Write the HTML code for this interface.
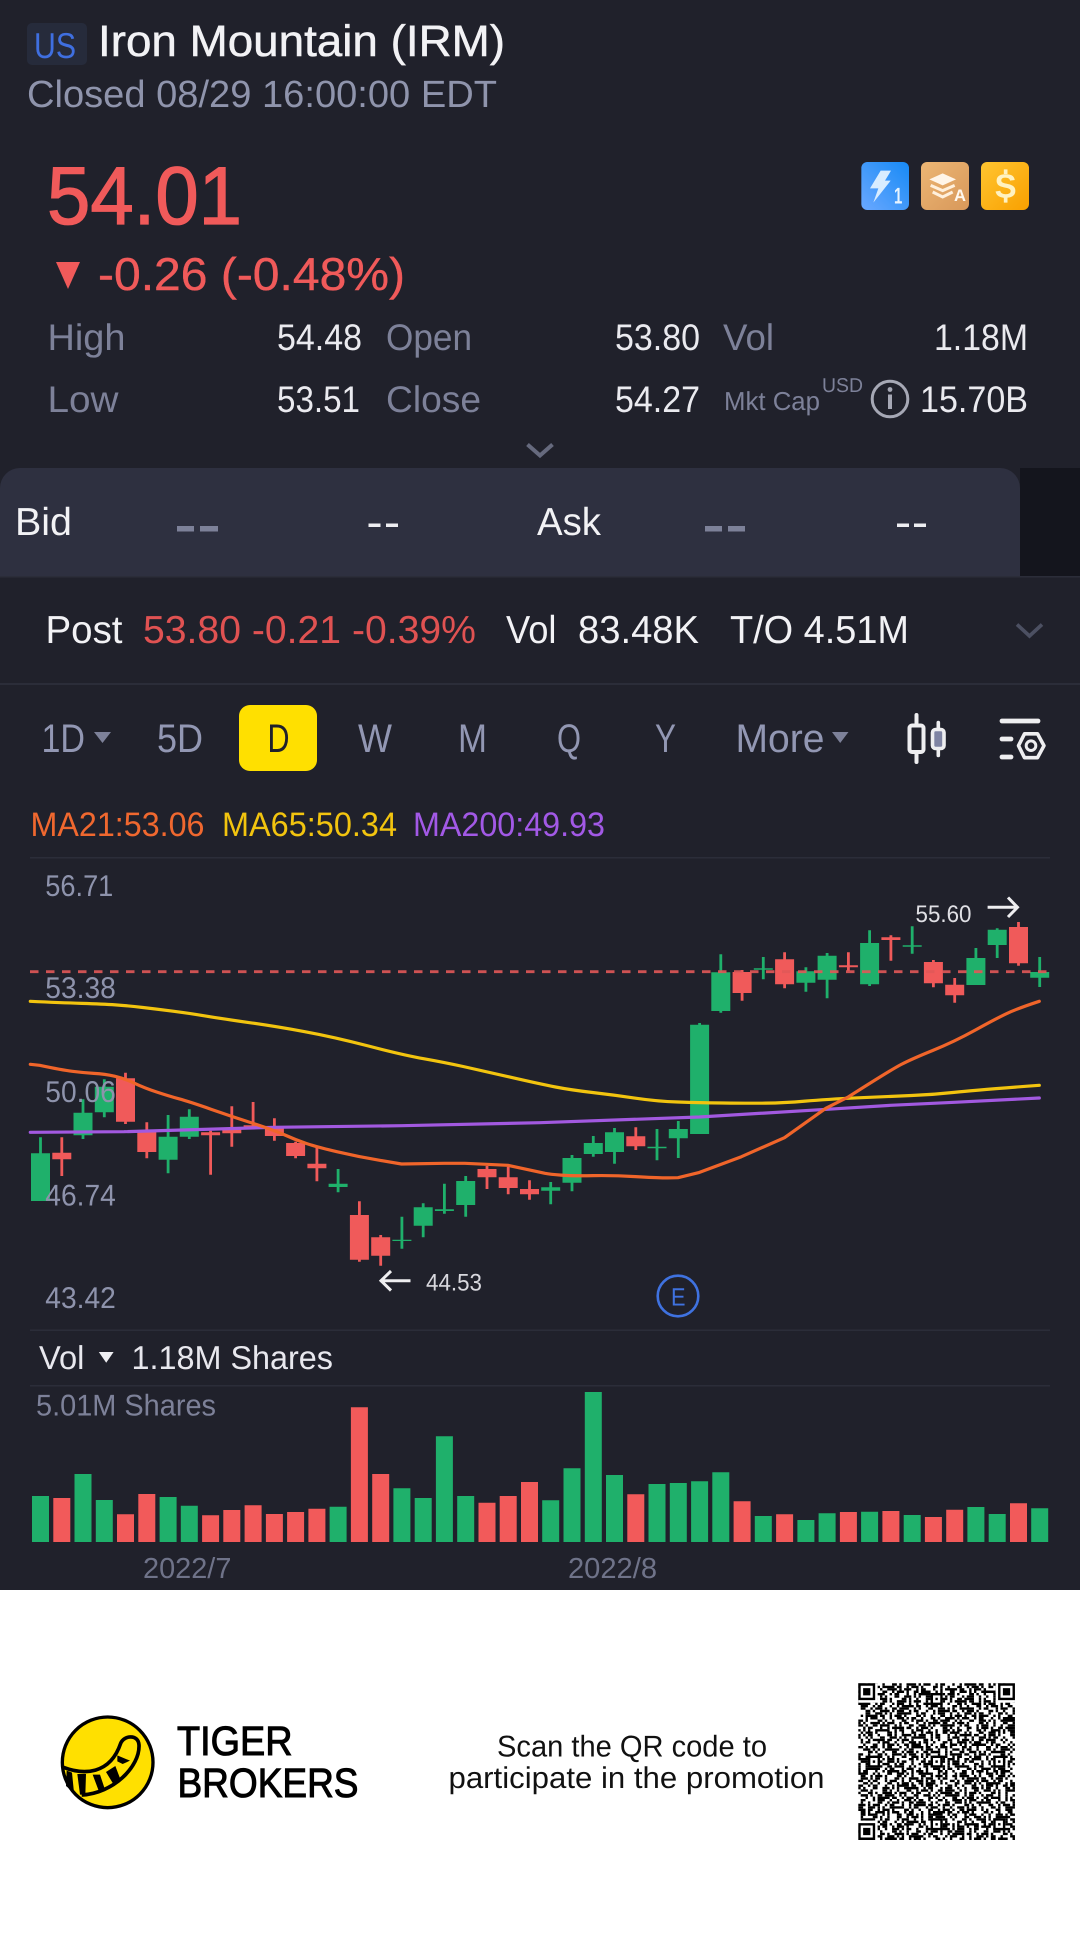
<!DOCTYPE html>
<html lang="en"><head><meta charset="utf-8"><title>Iron Mountain (IRM)</title>
<style>
html,body{margin:0;padding:0;background:#20212b;width:1080px;height:1935px;overflow:hidden}
svg{display:block}
text{font-family:"Liberation Sans",sans-serif;white-space:pre;text-rendering:geometricPrecision}
</style></head><body>
<svg xmlns="http://www.w3.org/2000/svg" width="1080" height="1935" viewBox="0 0 1080 1935">
<defs>
<linearGradient id="gb" x1="0" y1="1" x2="1" y2="0"><stop offset="0" stop-color="#6aa8ff"/><stop offset="1" stop-color="#178af5"/></linearGradient>
<linearGradient id="gw" x1="0" y1="0" x2="1" y2="1"><stop offset="0" stop-color="#ecb674"/><stop offset="1" stop-color="#d8985a"/></linearGradient>
<linearGradient id="gg" x1="0" y1="0" x2="1" y2="1"><stop offset="0" stop-color="#ffc530"/><stop offset="1" stop-color="#f9a000"/></linearGradient>
</defs>
<rect width="1080" height="1935" fill="#20212b"/>

<!-- header -->
<rect x="27" y="23" width="60" height="42" rx="5" fill="#262b3b"/>
<text x="34" y="58" font-size="36" fill="#3f6fe0" textLength="42" lengthAdjust="spacingAndGlyphs">US</text>
<text x="98" y="56" font-size="44" fill="#f2f2f5" stroke="#f2f2f5" stroke-width=".5" textLength="407" lengthAdjust="spacingAndGlyphs">Iron Mountain (IRM)</text>
<text x="27" y="107" font-size="38" fill="#8f94ac" textLength="470" lengthAdjust="spacingAndGlyphs">Closed 08/29 16:00:00 EDT</text>

<text x="47" y="224" font-size="82" fill="#f05a5a" stroke="#f05a5a" stroke-width="1.2" textLength="195" lengthAdjust="spacingAndGlyphs">54.01</text>
<path d="M56 262H80L68 289Z" fill="#f05a5a"/>
<text x="98" y="290" font-size="46" fill="#f05a5a" stroke="#f05a5a" stroke-width=".4" textLength="307" lengthAdjust="spacingAndGlyphs">-0.26 (-0.48%)</text>

<g transform="translate(840 140) scale(.33333)">
<rect x="64" y="66" width="143" height="144" rx="18" fill="url(#gb)"/>
<path d="M122 92H153L135 122H152L100 188L115 145H90Z" fill="#d8ecff"/>
<text x="162" y="190" font-size="68" font-weight="700" fill="#e8f4ff" textLength="25" lengthAdjust="spacingAndGlyphs">1</text>
<rect x="243" y="66" width="144" height="144" rx="18" fill="url(#gw)"/>
<path d="M268 118L308 100L348 118L308 136Z" fill="#fff5e8"/>
<path d="M272 136L308 152L344 136M278 156L308 171L338 156" fill="none" stroke="#fff0dc" stroke-width="9"/>
<text x="342" y="183" font-size="50" font-weight="700" fill="#fff8ee" textLength="36" lengthAdjust="spacingAndGlyphs">A</text>
<rect x="423" y="66" width="144" height="144" rx="18" fill="url(#gg)"/>
<text x="464" y="172" font-size="100" font-weight="700" fill="#fff2c0" textLength="66" lengthAdjust="spacingAndGlyphs">S</text>
<path d="M497 88V102M497 172V188" stroke="#fff2c0" stroke-width="11"/>
</g>

<g font-size="37" fill="#7d8199">
<text x="47.5" y="350" textLength="78" lengthAdjust="spacingAndGlyphs">High</text>
<text x="386" y="350" textLength="86" lengthAdjust="spacingAndGlyphs">Open</text>
<text x="723" y="350" textLength="51" lengthAdjust="spacingAndGlyphs">Vol</text>
<text x="47.5" y="412" textLength="71" lengthAdjust="spacingAndGlyphs">Low</text>
<text x="386" y="412" textLength="95" lengthAdjust="spacingAndGlyphs">Close</text>
</g>
<g font-size="37" fill="#eaeaef">
<text x="277" y="350" textLength="85" lengthAdjust="spacingAndGlyphs">54.48</text>
<text x="615" y="350" textLength="85" lengthAdjust="spacingAndGlyphs">53.80</text>
<text x="934" y="350" textLength="94" lengthAdjust="spacingAndGlyphs">1.18M</text>
<text x="277" y="412" textLength="83" lengthAdjust="spacingAndGlyphs">53.51</text>
<text x="615" y="412" textLength="85" lengthAdjust="spacingAndGlyphs">54.27</text>
<text x="920" y="412" textLength="108" lengthAdjust="spacingAndGlyphs">15.70B</text>
</g>
<text x="724" y="410" font-size="26" fill="#7d8199" textLength="96" lengthAdjust="spacingAndGlyphs">Mkt Cap</text>
<text x="822" y="392" font-size="20" fill="#7d8199" textLength="41" lengthAdjust="spacingAndGlyphs">USD</text>
<circle cx="890" cy="399" r="17.8" fill="none" stroke="#a6a8b5" stroke-width="3"/>
<circle cx="890" cy="389.5" r="2.4" fill="#a6a8b5"/>
<rect x="888" y="394.5" width="4" height="14.5" fill="#a6a8b5"/>
<path d="M527.5 444.5L540 455.5L552.5 444.5" fill="none" stroke="#666a7e" stroke-width="4"/>

<!-- bid/ask -->
<rect x="1020" y="468" width="60" height="108" fill="#14151d"/>
<path d="M0 577V488A20 20 0 0 1 20 468H1000A20 20 0 0 1 1020 488V577Z" fill="#2e3040"/>
<text x="15" y="535" font-size="39" fill="#f2f2f5" textLength="57" lengthAdjust="spacingAndGlyphs">Bid</text>
<text x="537" y="535" font-size="39" fill="#f2f2f5" textLength="64" lengthAdjust="spacingAndGlyphs">Ask</text>
<path d="M177 526h17v5.5h-17zM200 526h18v5.5h-18zM705 526h17v5.5h-17zM728 526h17v5.5h-17z" fill="#7d8199"/>
<path d="M368.5 523.5h12v3.5h-12zM386 523.5h12v3.5h-12zM897 523.5h12v3.5h-12zM914 523.5h12v3.5h-12z" fill="#eeeef2"/>

<!-- post -->
<text x="45.5" y="643" font-size="39" fill="#f2f2f5" textLength="77" lengthAdjust="spacingAndGlyphs">Post</text>
<text x="143" y="643" font-size="39" fill="#e05252" textLength="333" lengthAdjust="spacingAndGlyphs">53.80 -0.21 -0.39%</text>
<text x="506" y="643" font-size="39" fill="#f2f2f5" textLength="50.5" lengthAdjust="spacingAndGlyphs">Vol</text>
<text x="578" y="643" font-size="39" fill="#f2f2f5" textLength="121" lengthAdjust="spacingAndGlyphs">83.48K</text>
<text x="730" y="643" font-size="39" fill="#f2f2f5" textLength="179" lengthAdjust="spacingAndGlyphs">T/O 4.51M</text>
<path d="M1017 624.5L1029.5 636L1042 624.5" fill="none" stroke="#4c5062" stroke-width="3.6"/>
<rect x="0" y="683" width="1080" height="2" fill="#2b2d39"/>
<rect x="0" y="576" width="1080" height="1.5" fill="#2b2d39"/>

<!-- tabs -->
<g font-size="40" fill="#9297b3">
<text x="41.5" y="752" textLength="43.5" lengthAdjust="spacingAndGlyphs">1D</text>
<text x="157" y="752" textLength="46" lengthAdjust="spacingAndGlyphs">5D</text>
<text x="358" y="752" textLength="34" lengthAdjust="spacingAndGlyphs">W</text>
<text x="458" y="752" textLength="29" lengthAdjust="spacingAndGlyphs">M</text>
<text x="557" y="752" textLength="24" lengthAdjust="spacingAndGlyphs">Q</text>
<text x="655" y="752" textLength="21" lengthAdjust="spacingAndGlyphs">Y</text>
<text x="735.5" y="752" textLength="89" lengthAdjust="spacingAndGlyphs">More</text>
</g>
<path d="M94 732H111L102.5 743ZM832 732H848.5L840.2 743Z" fill="#7d8199"/>
<rect x="239" y="705" width="78" height="66" rx="11" fill="#ffe000"/>
<text x="267.5" y="752" font-size="40" fill="#20212b" textLength="22" lengthAdjust="spacingAndGlyphs">D</text>

<rect x="909.5" y="725.5" width="14" height="26.5" rx="2.5" fill="#20212b" stroke="#eeeef0" stroke-width="4"/>
<path d="M916.5 715V724M916.5 753V762" stroke="#eeeef0" stroke-width="4" stroke-linecap="round"/>
<rect x="932.5" y="729.5" width="11.5" height="19" rx="3" fill="#7f84a3" stroke="#eeeef0" stroke-width="3.6"/>
<path d="M938.3 722.5V728M938.3 750V755.5" stroke="#eeeef0" stroke-width="3.6" stroke-linecap="round"/>
<path d="M1002 721H1038M1002 739H1011M1002 757H1011" stroke="#eeeef0" stroke-width="4.8" stroke-linecap="round"/>
<path d="M1018.5 745.7L1024.5 733.8H1037.5L1044 745.7L1037.5 757.7H1024.5Z" fill="none" stroke="#eeeef0" stroke-width="3.6" stroke-linejoin="round"/>
<circle cx="1031" cy="745.7" r="4.8" fill="none" stroke="#eeeef0" stroke-width="3"/>

<!-- MA legend -->
<text x="30.5" y="836" font-size="34" fill="#f0682f" textLength="174" lengthAdjust="spacingAndGlyphs">MA21:53.06</text>
<text x="222" y="836" font-size="34" fill="#f2c40f" textLength="175" lengthAdjust="spacingAndGlyphs">MA65:50.34</text>
<text x="413" y="836" font-size="34" fill="#a259e6" textLength="192" lengthAdjust="spacingAndGlyphs">MA200:49.93</text>
<rect x="30" y="857" width="1020" height="1.5" fill="#2b2d39"/>

<!-- candles -->
<g fill="none">
<path stroke="#1fb06b" stroke-width="2.8" d="M40.5 1137.3V1201M83 1099.3V1139M104.3 1079.3V1117.3M168.1 1115V1173.3M189.3 1109.3V1139M338.1 1169V1192.3M401.9 1216.7V1248.7M423.2 1203.3V1237.3M444.4 1183.7V1213.7M465.7 1176V1216.7M550.7 1182V1204.3M572 1155V1191.3M593.3 1136V1156.7M614.5 1128V1163.7M657 1129V1160.3M678.3 1121V1158M699.6 1023V1134M720.8 954.3V1012.7M763.3 957V979.3M805.9 967.3V991.7M827.1 953V998.3M869.6 930.3V986M912.2 926.3V953.7M975.9 948V985M997.2 928.3V958M1039.7 957V987"/>
<path stroke="#1fb06b" stroke-width="19" d="M40.5 1153.3V1201M83 1112.7V1135.3M104.3 1086.7V1112.3M168.1 1136.7V1159.7M189.3 1116.7V1136.7M338.1 1183.7V1187M401.9 1239.7V1241M423.2 1207.3V1225.7M444.4 1209.3V1211M465.7 1181V1205M550.7 1187.3V1190.7M572 1158V1182.7M593.3 1143V1154M614.5 1132.3V1152M657 1146.7V1148.3M678.3 1129V1138.3M699.6 1024.7V1134M720.8 972.3V1011M763.3 968.3V969.7M805.9 971.3V982.7M827.1 955.7V979.7M869.6 943V984.3M912.2 945.3V946.7M975.9 958V985M997.2 929.7V945M1039.7 972V977.7"/>
<path stroke="#f05a5a" stroke-width="2.8" d="M61.8 1137.3V1176M125.5 1072.7V1124M146.8 1122.3V1158.3M210.6 1130.7V1174.7M231.8 1106.3V1146.7M253.1 1102V1128.3M274.4 1118.3V1140.7M295.6 1141.7V1158.3M316.9 1146.7V1181.3M359.4 1201.3V1261.7M380.7 1235V1265.7M487 1166V1189M508.2 1166.7V1194.3M529.5 1180.3V1199.7M635.8 1127.3V1150M742.1 970V1000.7M784.6 952.3V988.3M848.4 952.3V970.7M890.9 935.3V960.7M933.4 960V987.3M954.7 978V1002.7M1018.5 922V965.7"/>
<path stroke="#f05a5a" stroke-width="19" d="M61.8 1152.7V1159.3M125.5 1078.3V1121.7M146.8 1130.7V1152M210.6 1132.3V1135.3M231.8 1129.3V1133.3M253.1 1125.3V1128.3M274.4 1128.3V1136M295.6 1143V1156M316.9 1163.7V1168.3M359.4 1215V1259.7M380.7 1237.3V1255.7M487 1169V1177.3M508.2 1177.3V1188M529.5 1189V1194.3M635.8 1136.3V1146.3M742.1 972V993M784.6 959.3V984.3M848.4 965.3V967.3M890.9 937.3V940M933.4 962V983.3M954.7 984.7V995.3M1018.5 927V963.3"/>
</g>
<path d="M30 971.7H1047" stroke="#e25858" stroke-width="2.8" stroke-dasharray="8.5 7.5" opacity=".9"/>

<!-- MA lines -->
<g fill="none" stroke-width="3.2" stroke-linejoin="round" stroke-linecap="round">
<polyline stroke="#a259e0" points="30.3,1132.3 124,1131.7 274,1127.3 402,1125.7 540,1122.7 699.4,1117 826.8,1109.3 890.6,1105.3 954.3,1102.3 1039.3,1098"/>
<path stroke="#f2c40f" d="M30.3 1001.3Q60.3 1002.7 81.8 1003.35Q103.3 1004 115.4 1004.85Q127.4 1005.7 142.9 1007.5Q158.4 1009.3 173.9 1011.3Q189.4 1013.3 206.6 1016.15Q223.8 1019 249.65 1022.65Q275.5 1026.3 304.75 1031.65Q334 1037 368.45 1046Q402.9 1055 423.55 1058.65Q444.2 1062.3 463.15 1066.5Q482.1 1070.7 511 1077.35Q540 1084 555.5 1087Q571 1090 592.5 1092.5Q614 1095 635.5 1098.15Q657 1101.3 678 1102Q699 1102.7 722.8 1103Q746.6 1103.3 765.55 1103.15Q784.5 1103 805.15 1101.15Q825.8 1099.3 858.2 1097.8Q890.6 1096.3 911.6 1095.5Q932.6 1094.7 954.1 1092.35Q975.6 1090 1039.3 1085.3"/>
<path stroke="#f0652a" d="M30.3 1064.3L39.6 1065.3Q62 1070 72.3 1071.35Q82.6 1072.7 93.8 1073.35Q105 1074 114.5 1076.15Q124 1078.3 134.3 1083.15Q144.6 1088 156.65 1092Q168.7 1096 179 1098.85Q189.4 1101.7 210.9 1109.2Q232.4 1116.7 253.1 1123.35Q273.8 1130 284.9 1135Q296 1140 306.4 1143.5Q316.8 1147 337.4 1151.85Q358 1156.7 379.75 1160.35L401.5 1164L444.2 1163.3L464.9 1163.3L507.9 1165.3Q540 1172.3 545 1173.3Q550.3 1174.3 561 1175.15Q571.7 1176 592.85 1175.65Q614 1175.3 635.5 1176.65Q657 1178 667.5 1177.85L678 1177.7L698.4 1172.7L741.4 1156.7L784.5 1137.7L825.8 1108.3L848.2 1097Q890.6 1070 901.1 1064.5Q911.6 1059 932.95 1050.35Q954.3 1041.7 975.45 1030Q996.6 1018.3 1007.3 1013.3Q1018 1008.3 1039.3 1001.3"/>
</g>

<!-- axis labels -->
<g font-size="30" fill="#8e93ac">
<text x="45.3" y="896" textLength="68" lengthAdjust="spacingAndGlyphs">56.71</text>
<text x="45.3" y="998" textLength="70.5" lengthAdjust="spacingAndGlyphs">53.38</text>
<text x="45.3" y="1102" textLength="70.5" lengthAdjust="spacingAndGlyphs">50.06</text>
<text x="45.3" y="1205.7" textLength="70.5" lengthAdjust="spacingAndGlyphs">46.74</text>
<text x="45.3" y="1308" textLength="70.5" lengthAdjust="spacingAndGlyphs">43.42</text>
</g>
<path d="M410.5 1280.7H382M391 1271L381 1280.7L391 1290.5" fill="none" stroke="#eeeef0" stroke-width="3"/>
<text x="426" y="1290.7" font-size="24" fill="#d8d8de" textLength="56" lengthAdjust="spacingAndGlyphs">44.53</text>
<text x="915.5" y="922" font-size="24" fill="#e0e0e5" textLength="56" lengthAdjust="spacingAndGlyphs">55.60</text>
<path d="M987.6 907.3H1016.5M1008 897.5L1017.5 907.3L1008 917" fill="none" stroke="#eeeef0" stroke-width="3"/>
<circle cx="678" cy="1296" r="20.3" fill="none" stroke="#3f72e0" stroke-width="2.6"/>
<text x="671" y="1305.5" font-size="25" fill="#3f72e0" textLength="14.5" lengthAdjust="spacingAndGlyphs">E</text>

<!-- volume -->
<rect x="30" y="1329.5" width="1020" height="1.5" fill="#2b2d39"/>
<text x="39" y="1369" font-size="33" fill="#e8e8ee" textLength="45.4" lengthAdjust="spacingAndGlyphs">Vol</text>
<path d="M98.8 1352H113.6L106.2 1362.7Z" fill="#eeeef2"/>
<text x="131.5" y="1369" font-size="33" fill="#e8e8ee" textLength="201.5" lengthAdjust="spacingAndGlyphs">1.18M Shares</text>
<rect x="30" y="1385" width="1020" height="1.5" fill="#2b2d39"/>
<text x="36" y="1415.7" font-size="30" fill="#7d8199" textLength="180" lengthAdjust="spacingAndGlyphs">5.01M Shares</text>
<g fill="none" stroke-width="17">
<path stroke="#1fb06b" d="M40.5 1542V1496M83 1542V1474M104.3 1542V1500M168.1 1542V1497M189.3 1542V1505.7M338.1 1542V1506.7M401.9 1542V1488.3M423.2 1542V1498M444.4 1542V1436.3M465.7 1542V1496M550.7 1542V1500.3M572 1542V1468.3M593.3 1542V1392M614.5 1542V1475M657 1542V1484M678.3 1542V1483M699.6 1542V1481.3M720.8 1542V1472.3M763.3 1542V1516M805.9 1542V1520M827.1 1542V1513.3M869.6 1542V1511.7M912.2 1542V1515M975.9 1542V1507M997.2 1542V1514M1039.7 1542V1508.3"/>
<path stroke="#f25a5a" d="M61.8 1542V1498M125.5 1542V1514.3M146.8 1542V1494M210.6 1542V1515.3M231.8 1542V1510M253.1 1542V1505.3M274.4 1542V1514M295.6 1542V1512M316.9 1542V1508.7M359.4 1542V1407.3M380.7 1542V1474M487 1542V1502.7M508.2 1542V1496M529.5 1542V1482M635.8 1542V1494.3M742.1 1542V1501.3M784.6 1542V1514.3M848.4 1542V1512M890.9 1542V1511M933.4 1542V1517M954.7 1542V1509.7M1018.5 1542V1503.3"/>
</g>
<text x="143" y="1578" font-size="29" fill="#6f7389" textLength="88.4" lengthAdjust="spacingAndGlyphs">2022/7</text>
<text x="568" y="1578" font-size="29" fill="#6f7389" textLength="89" lengthAdjust="spacingAndGlyphs">2022/8</text>

<!-- footer -->
<rect x="0" y="1590" width="1080" height="345" fill="#ffffff"/>
<g transform="translate(0 1660) scale(.33333)">
<circle cx="323" cy="307" r="136" fill="#ffe000" stroke="#000" stroke-width="10"/>
<path d="M190 322C250 345 330 345 362 250C372 225 415 222 417 255C420 320 340 400 245 405" fill="#ffe000" stroke="#000" stroke-width="11"/>
<path d="M200 332L216 338L222 398L198 378ZM232 342H258L256 404H240ZM278 344H300L314 386L296 392ZM318 336L346 318L362 360L340 372ZM352 286L390 302L368 312L352 304Z" fill="#000"/>
</g>
<text x="177" y="1755" font-size="41" fill="#000" stroke="#000" stroke-width="1" textLength="115.5" lengthAdjust="spacingAndGlyphs">TIGER</text>
<text x="177.5" y="1797" font-size="41" fill="#000" stroke="#000" stroke-width="1" textLength="181" lengthAdjust="spacingAndGlyphs">BROKERS</text>
<text x="497" y="1756.7" font-size="30" fill="#111" textLength="270" lengthAdjust="spacingAndGlyphs">Scan the QR code to</text>
<text x="448.5" y="1788" font-size="30" fill="#111" textLength="376" lengthAdjust="spacingAndGlyphs">participate in the promotion</text>

<!-- QR -->
<g transform="translate(858.3 1683.3) scale(2.41)">
<g fill="none" stroke="#000" stroke-width="1" stroke-dasharray="1 2 3 1 1 1 2 2 1 3 2 1 1 2 4 1 1 1 3 2 1 1 2 3 1 2 1 1 5 1 2 2 1 1 3 1 1 4 2 1 1 2 1 3 2 2 1 1 3 1 1 2 2 1 4 2 1 1 1 3 2 2 3 1 1 1 1 2 6 2 1 1 2 3 1 1 3 2 1 2">
<path d="M0 .5H65" stroke-dashoffset="3"/><path d="M0 1.5H65" stroke-dashoffset="37"/><path d="M0 2.5H65" stroke-dashoffset="11"/><path d="M0 3.5H65" stroke-dashoffset="68"/><path d="M0 4.5H65" stroke-dashoffset="22"/>
<path d="M0 5.5H65" stroke-dashoffset="91"/><path d="M0 6.5H65" stroke-dashoffset="50"/><path d="M0 7.5H65" stroke-dashoffset="7"/><path d="M0 8.5H65" stroke-dashoffset="120"/><path d="M0 9.5H65" stroke-dashoffset="29"/>
<path d="M0 10.5H65" stroke-dashoffset="77"/><path d="M0 11.5H65" stroke-dashoffset="14"/><path d="M0 12.5H65" stroke-dashoffset="103"/><path d="M0 13.5H65" stroke-dashoffset="44"/><path d="M0 14.5H65" stroke-dashoffset="131"/>
<path d="M0 15.5H65" stroke-dashoffset="60"/><path d="M0 16.5H65" stroke-dashoffset="18"/><path d="M0 17.5H65" stroke-dashoffset="85"/><path d="M0 18.5H65" stroke-dashoffset="33"/><path d="M0 19.5H65" stroke-dashoffset="112"/>
<path d="M0 20.5H65" stroke-dashoffset="56"/><path d="M0 21.5H65" stroke-dashoffset="5"/><path d="M0 22.5H65" stroke-dashoffset="97"/><path d="M0 23.5H65" stroke-dashoffset="41"/><path d="M0 24.5H65" stroke-dashoffset="126"/>
<path d="M0 25.5H65" stroke-dashoffset="72"/><path d="M0 26.5H65" stroke-dashoffset="25"/><path d="M0 27.5H65" stroke-dashoffset="108"/><path d="M0 28.5H65" stroke-dashoffset="64"/><path d="M0 29.5H65" stroke-dashoffset="9"/>
<path d="M0 30.5H65" stroke-dashoffset="88"/><path d="M0 31.5H65" stroke-dashoffset="47"/><path d="M0 32.5H65" stroke-dashoffset="135"/><path d="M0 33.5H65" stroke-dashoffset="20"/><path d="M0 34.5H65" stroke-dashoffset="79"/>
<path d="M0 35.5H65" stroke-dashoffset="116"/><path d="M0 36.5H65" stroke-dashoffset="35"/><path d="M0 37.5H65" stroke-dashoffset="94"/><path d="M0 38.5H65" stroke-dashoffset="52"/><path d="M0 39.5H65" stroke-dashoffset="2"/>
<path d="M0 40.5H65" stroke-dashoffset="123"/><path d="M0 41.5H65" stroke-dashoffset="66"/><path d="M0 42.5H65" stroke-dashoffset="31"/><path d="M0 43.5H65" stroke-dashoffset="100"/><path d="M0 44.5H65" stroke-dashoffset="58"/>
<path d="M0 45.5H65" stroke-dashoffset="13"/><path d="M0 46.5H65" stroke-dashoffset="83"/><path d="M0 47.5H65" stroke-dashoffset="39"/><path d="M0 48.5H65" stroke-dashoffset="128"/><path d="M0 49.5H65" stroke-dashoffset="70"/>
<path d="M0 50.5H65" stroke-dashoffset="24"/><path d="M0 51.5H65" stroke-dashoffset="106"/><path d="M0 52.5H65" stroke-dashoffset="49"/><path d="M0 53.5H65" stroke-dashoffset="16"/><path d="M0 54.5H65" stroke-dashoffset="90"/>
<path d="M0 55.5H65" stroke-dashoffset="62"/><path d="M0 56.5H65" stroke-dashoffset="118"/><path d="M0 57.5H65" stroke-dashoffset="27"/><path d="M0 58.5H65" stroke-dashoffset="75"/><path d="M0 59.5H65" stroke-dashoffset="43"/>
<path d="M0 60.5H65" stroke-dashoffset="133"/><path d="M0 61.5H65" stroke-dashoffset="54"/><path d="M0 62.5H65" stroke-dashoffset="8"/><path d="M0 63.5H65" stroke-dashoffset="98"/><path d="M0 64.5H65" stroke-dashoffset="36"/>
</g>
<path d="M0 0h8v8H0zM57 0h8v8h-8zM0 57h8v8H0z" fill="#fff"/>
<path fill-rule="evenodd" d="M0 0h7v7H0zM1 1v5h5V1zM2 2h3v3H2zM58 0h7v7h-7zM59 1v5h5V1zM60 2h3v3h-3zM0 58h7v7H0zM1 59v5h5v-5zM2 60h3v3H2z" fill="#000"/>
<path d="M30 4h5v5h-5zM4 30h5v5H4zM30 30h5v5h-5zM56 30h5v5h-5zM30 56h5v5h-5zM56 56h5v5h-5z" fill="#000"/>
<path d="M31 5h3v3h-3zM5 31h3v3H5zM31 31h3v3h-3zM57 31h3v3h-3zM31 57h3v3h-3zM57 57h3v3h-3z" fill="#fff"/>
<path d="M32 6h1v1h-1zM6 32h1v1H6zM32 32h1v1h-1zM58 32h1v1h-1zM32 58h1v1h-1zM58 58h1v1h-1z" fill="#000"/>
</g>
</svg>
</body></html>
